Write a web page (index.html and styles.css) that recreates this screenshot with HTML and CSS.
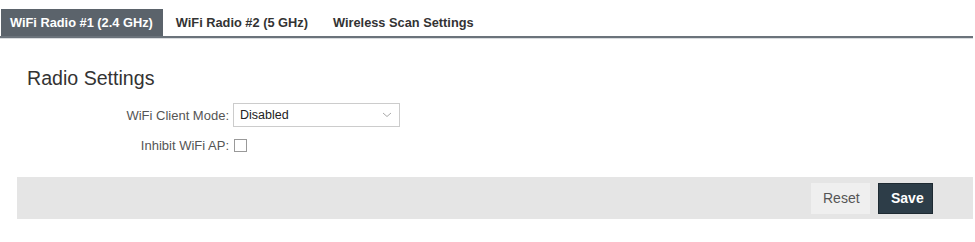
FILE: index.html
```html
<!DOCTYPE html>
<html>
<head>
<meta charset="utf-8">
<link rel="stylesheet" href="styles.css">
</head>
<body>
<div class="tabs">
  <div class="tab active">WiFi Radio #1 (2.4 GHz)</div>
  <div class="tab">WiFi Radio #2 (5 GHz)</div>
  <div class="tab">Wireless Scan Settings</div>
</div>
<div class="content">
  <h2 class="title">Radio Settings</h2>
  <div class="form">
    <div class="row">
      <label class="label">WiFi Client Mode:</label>
      <div class="select">
        <span>Disabled</span>
        <svg class="chev" width="10" height="6" viewBox="0 0 10 6"><path d="M1 1 L5 4.5 L9 1" fill="none" stroke="#aaa" stroke-width="1"/></svg>
      </div>
    </div>
    <div class="row row2">
      <label class="label">Inhibit WiFi AP:</label>
      <span class="check"></span>
    </div>
  </div>
</div>
<div class="footer">
  <button class="btn reset">Reset</button>
  <button class="btn save">Save</button>
</div>
</body>
</html>
```
FILE: styles.css
```css
html, body {
  margin: 0;
  padding: 0;
  background: #fff;
  font-family: "Liberation Sans", Arial, sans-serif;
}
.tabs {
  display: flex;
  padding-top: 9px;
  margin-right: 2px;
  border-bottom: 2px solid #6b737b;
  box-shadow: 0 1px 0 #d9dcdf;
}
.tab {
  height: 27px;
  line-height: 27px;
  padding: 0 12px 0 13px;
  font-size: 12.8px;
  font-weight: bold;
  color: #333;
}
.tab.active {
  background: #5b636b;
  color: #fff;
  margin-left: 1px;
  padding: 0 10px 0 9px;
}
.content {
  padding: 0 0 0 27px;
}
.title {
  margin: 29px 0 0 0;
  font-size: 19.6px;
  font-weight: normal;
  color: #333;
  line-height: 22px;
}
.form {
  margin-top: 14px;
}
.row {
  display: flex;
  align-items: center;
}
.row2 {
  margin-top: 11px;
}
.label {
  width: 202px;
  text-align: right;
  font-size: 13px;
  color: #555;
  padding-right: 4px;
}
.select {
  border: 1px solid #ccc;
  display: flex;
  align-items: center;
  justify-content: space-between;
  padding: 0 7px 0 6px;
  box-sizing: border-box;
  width: 167px;
  height: 24px;
  font-size: 12.5px;
  color: #222;
}
.check {
  width: 11px;
  height: 11px;
  border: 1px solid #999;
  margin-left: 1px;
}
.footer {
  margin: 24px 2px 0 17px;
  height: 42px;
  background: #e5e5e5;
  display: flex;
  justify-content: flex-end;
  align-items: center;
  padding-right: 40px;
  gap: 8px;
}
.btn {
  height: 31px;
  border: none;
  font-family: "Liberation Sans", Arial, sans-serif;
  font-size: 14px;
  padding: 0 12px;
}
.reset {
  background: #efefef;
  color: #555;
  width: 59px;
}
.save {
  background: #2d3d48;
  color: #fff;
  font-weight: bold;
  width: 55px;
  border: 1px solid #1e2a32;
}
```
